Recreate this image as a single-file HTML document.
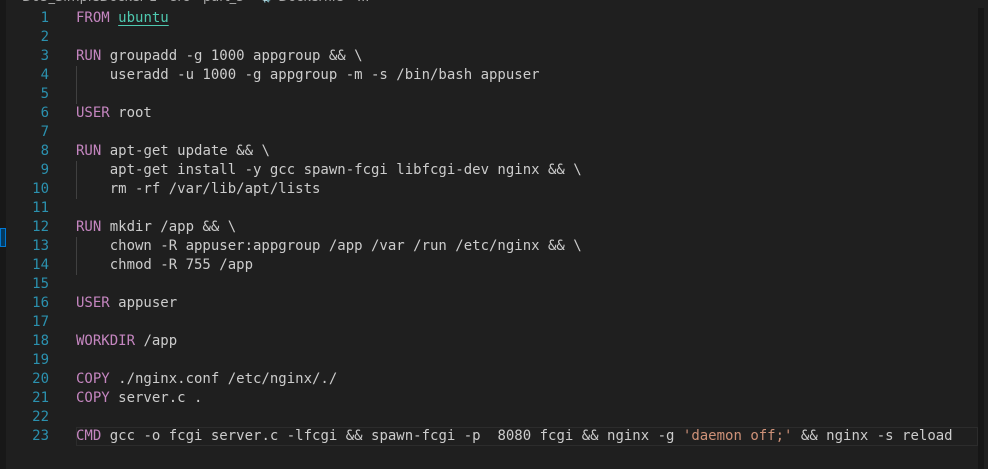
<!DOCTYPE html>
<html><head><meta charset="utf-8"><style>
html,body{margin:0;padding:0;width:988px;height:469px;overflow:hidden;background:#1f1f1f;}
.strip{position:absolute;left:0;top:0;width:6px;height:469px;background:#181818;}
.mark{position:absolute;left:0;top:228px;width:6px;height:19px;border:1px solid #0078d4;background:#04395e;box-sizing:border-box;}
.bc{position:absolute;left:22px;top:-10px;font:13px "DejaVu Sans","Liberation Sans",sans-serif;color:#a9a9a9;white-space:pre;}
.sb{position:absolute;left:978px;top:8px;width:6px;height:461px;background:#161616;}
.cur{position:absolute;left:76px;top:427px;width:902px;height:19px;border:1px solid #2c2c2c;box-sizing:border-box;}
.ln{position:absolute;left:0;width:49px;text-align:right;color:#2b91af;}
.code{position:absolute;left:76px;color:#cccccc;white-space:pre;}
.l{font:14px/19px "DejaVu Sans Mono","Liberation Mono",monospace;height:19px;}
.k{color:#c586c0}.t{color:#4ec9b0;text-decoration:underline;text-underline-offset:3px}.s{color:#ce9178}
.guide{position:absolute;left:76px;width:1px;background:#404040;}
</style></head><body>
<div class="strip"></div><div class="mark"></div>
<div class="bc">D05_SimpleDocker-1 › src › part_5 › 🐳 Dockerfile › ...</div>
<div class="sb"></div>
<div class="cur"></div>
<div class="guide" style="top:66px;height:38px"></div>
<div class="guide" style="top:161px;height:38px"></div>
<div class="guide" style="top:237px;height:38px"></div>
<div id="c"></div>
<script>
var lines=[
'<span class="k">FROM</span> <span class="t">ubuntu</span>','',
'<span class="k">RUN</span> groupadd -g 1000 appgroup &amp;&amp; \\',
'    useradd -u 1000 -g appgroup -m -s /bin/bash appuser','',
'<span class="k">USER</span> root','',
'<span class="k">RUN</span> apt-get update &amp;&amp; \\',
'    apt-get install -y gcc spawn-fcgi libfcgi-dev nginx &amp;&amp; \\',
'    rm -rf /var/lib/apt/lists','',
'<span class="k">RUN</span> mkdir /app &amp;&amp; \\',
'    chown -R appuser:appgroup /app /var /run /etc/nginx &amp;&amp; \\',
'    chmod -R 755 /app','',
'<span class="k">USER</span> appuser','',
'<span class="k">WORKDIR</span> /app','',
'<span class="k">COPY</span> ./nginx.conf /etc/nginx/./',
'<span class="k">COPY</span> server.c .','',
'<span class="k">CMD</span> gcc -o fcgi server.c -lfcgi &amp;&amp; spawn-fcgi -p  8080 fcgi &amp;&amp; nginx -g <span class="s">\'daemon off;\'</span> &amp;&amp; nginx -s reload'];
var h='';
for(var i=0;i<lines.length;i++){var y=9+i*19;
h+='<div class="ln l" style="top:'+y+'px">'+(i+1)+'</div><div class="code l" style="top:'+y+'px">'+lines[i]+'</div>';}
document.getElementById('c').innerHTML=h;
</script>
</body></html>
